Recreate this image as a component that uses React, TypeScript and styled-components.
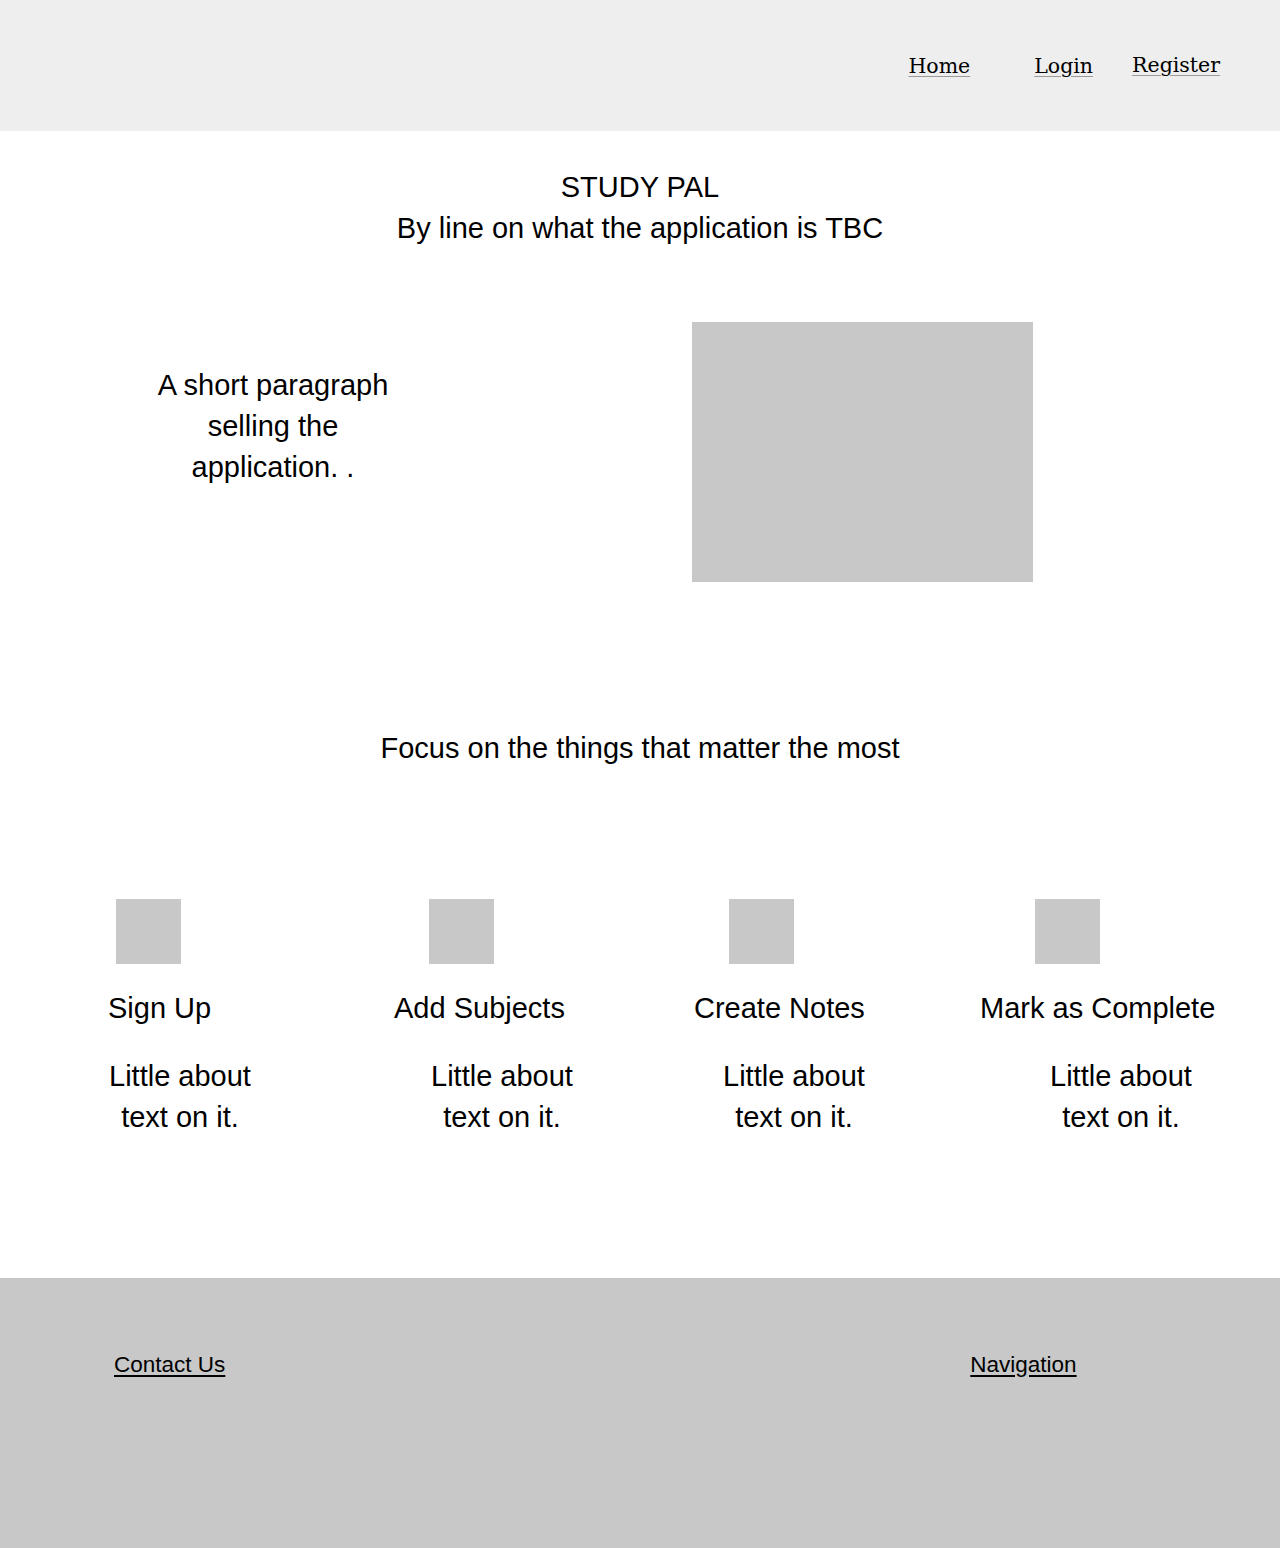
import React from "react";
import styled, { createGlobalStyle } from "styled-components";

const GlobalStyle = createGlobalStyle`
  html, body { margin: 0; padding: 0; background: #ffffff; }
  body { font-family: "Liberation Sans", Arial, sans-serif; color: #000; }
  * { box-sizing: border-box; }
`;

const Page = styled.div`
  width: 1280px;
  min-height: 1548px;
  display: flex;
  flex-direction: column;
`;

const Header = styled.header`
  height: 131px;
  background: #eeeeee;
  display: flex;
  align-items: center;
  justify-content: flex-end;
  padding-right: 60px;
`;

const NavLink = styled.a<{ $ml: number; $dy?: number }>`
  font-family: "DejaVu Serif", "Liberation Serif", serif;
  font-size: 20.5px;
  line-height: 24px;
  color: #000;
  text-decoration: underline;
  text-decoration-color: #9a9a9a;
  text-underline-offset: 3px;
  text-decoration-thickness: 1px;
  margin-left: ${(p) => p.$ml}px;
  margin-top: ${(p) => (p.$dy ? p.$dy : 0)}px;
`;

const TitleBlock = styled.section`
  padding-top: 36px;
  text-align: center;
  font-size: 29px;
  line-height: 41px;
`;

const TitleLine = styled.div``;

const HeroRow = styled.section`
  display: grid;
  grid-template-columns: 546px 1fr;
  margin-top: 73px;
`;

const HeroText = styled.p`
  margin: 43px 0 0 148px;
  width: 250px;
  text-align: center;
  font-size: 29px;
  line-height: 41px;
`;

const HeroImage = styled.div`
  margin-left: 146px;
  width: 341px;
  height: 260px;
  background: #c8c8c8;
`;

const Tagline = styled.h2`
  margin: 146px 0 0;
  font-weight: normal;
  text-align: center;
  font-size: 29px;
  line-height: 41px;
`;

const Features = styled.section`
  display: grid;
  grid-template-columns: repeat(4, 320px);
  margin-top: 130px;
`;

const Feature = styled.div`
  display: flex;
  flex-direction: column;
  align-items: flex-start;
`;

const FeatureIcon = styled.div<{ $ml: number }>`
  width: 65px;
  height: 65px;
  background: #c8c8c8;
  margin-left: ${(p) => p.$ml}px;
`;

const FeatureTitle = styled.h3<{ $ml: number }>`
  margin: 24px 0 0 ${(p) => p.$ml}px;
  font-weight: normal;
  font-size: 29px;
  line-height: 41px;
  white-space: nowrap;
`;

const FeatureDesc = styled.p<{ $ml: number }>`
  margin: 27px 0 0 ${(p) => p.$ml}px;
  width: 160px;
  text-align: center;
  font-size: 29px;
  line-height: 41px;
`;

const Footer = styled.footer`
  margin-top: auto;
  height: 270px;
  background: #c8c8c8;
  display: flex;
  align-items: flex-start;
  padding: 73px 0 0 114px;
`;

const FooterLink = styled.a<{ $ml?: number }>`
  font-size: 22.5px;
  line-height: 27px;
  color: #000;
  text-decoration: underline;
  text-underline-offset: 3px;
  margin-left: ${(p) => (p.$ml ? p.$ml : 0)}px;
`;

const features = [
  { title: "Sign Up", icon: 116, title_: 108, desc: 100 },
  { title: "Add Subjects", icon: 109, title_: 74, desc: 102 },
  { title: "Create Notes", icon: 89, title_: 54, desc: 74 },
  { title: "Mark as Complete", icon: 75, title_: 20, desc: 81 },
];

export default function App() {
  return (
    <>
      <GlobalStyle />
      <Page>
        <Header>
          <NavLink href="#" $ml={0}>Home</NavLink>
          <NavLink href="#" $ml={64}>Login</NavLink>
          <NavLink href="#" $ml={39} $dy={-2}>Register</NavLink>
        </Header>
        <TitleBlock>
          <TitleLine>STUDY PAL</TitleLine>
          <TitleLine>By line on what the application is TBC</TitleLine>
        </TitleBlock>
        <HeroRow>
          <HeroText>A short paragraph selling the application. .</HeroText>
          <HeroImage />
        </HeroRow>
        <Tagline>Focus on the things that matter the most</Tagline>
        <Features>
          {features.map((f) => (
            <Feature key={f.title}>
              <FeatureIcon $ml={f.icon} />
              <FeatureTitle $ml={f.title_}>{f.title}</FeatureTitle>
              <FeatureDesc $ml={f.desc}>Little about text on it.</FeatureDesc>
            </Feature>
          ))}
        </Features>
        <Footer>
          <FooterLink href="#">Contact Us</FooterLink>
          <FooterLink href="#" $ml={745}>Navigation</FooterLink>
        </Footer>
      </Page>
    </>
  );
}
